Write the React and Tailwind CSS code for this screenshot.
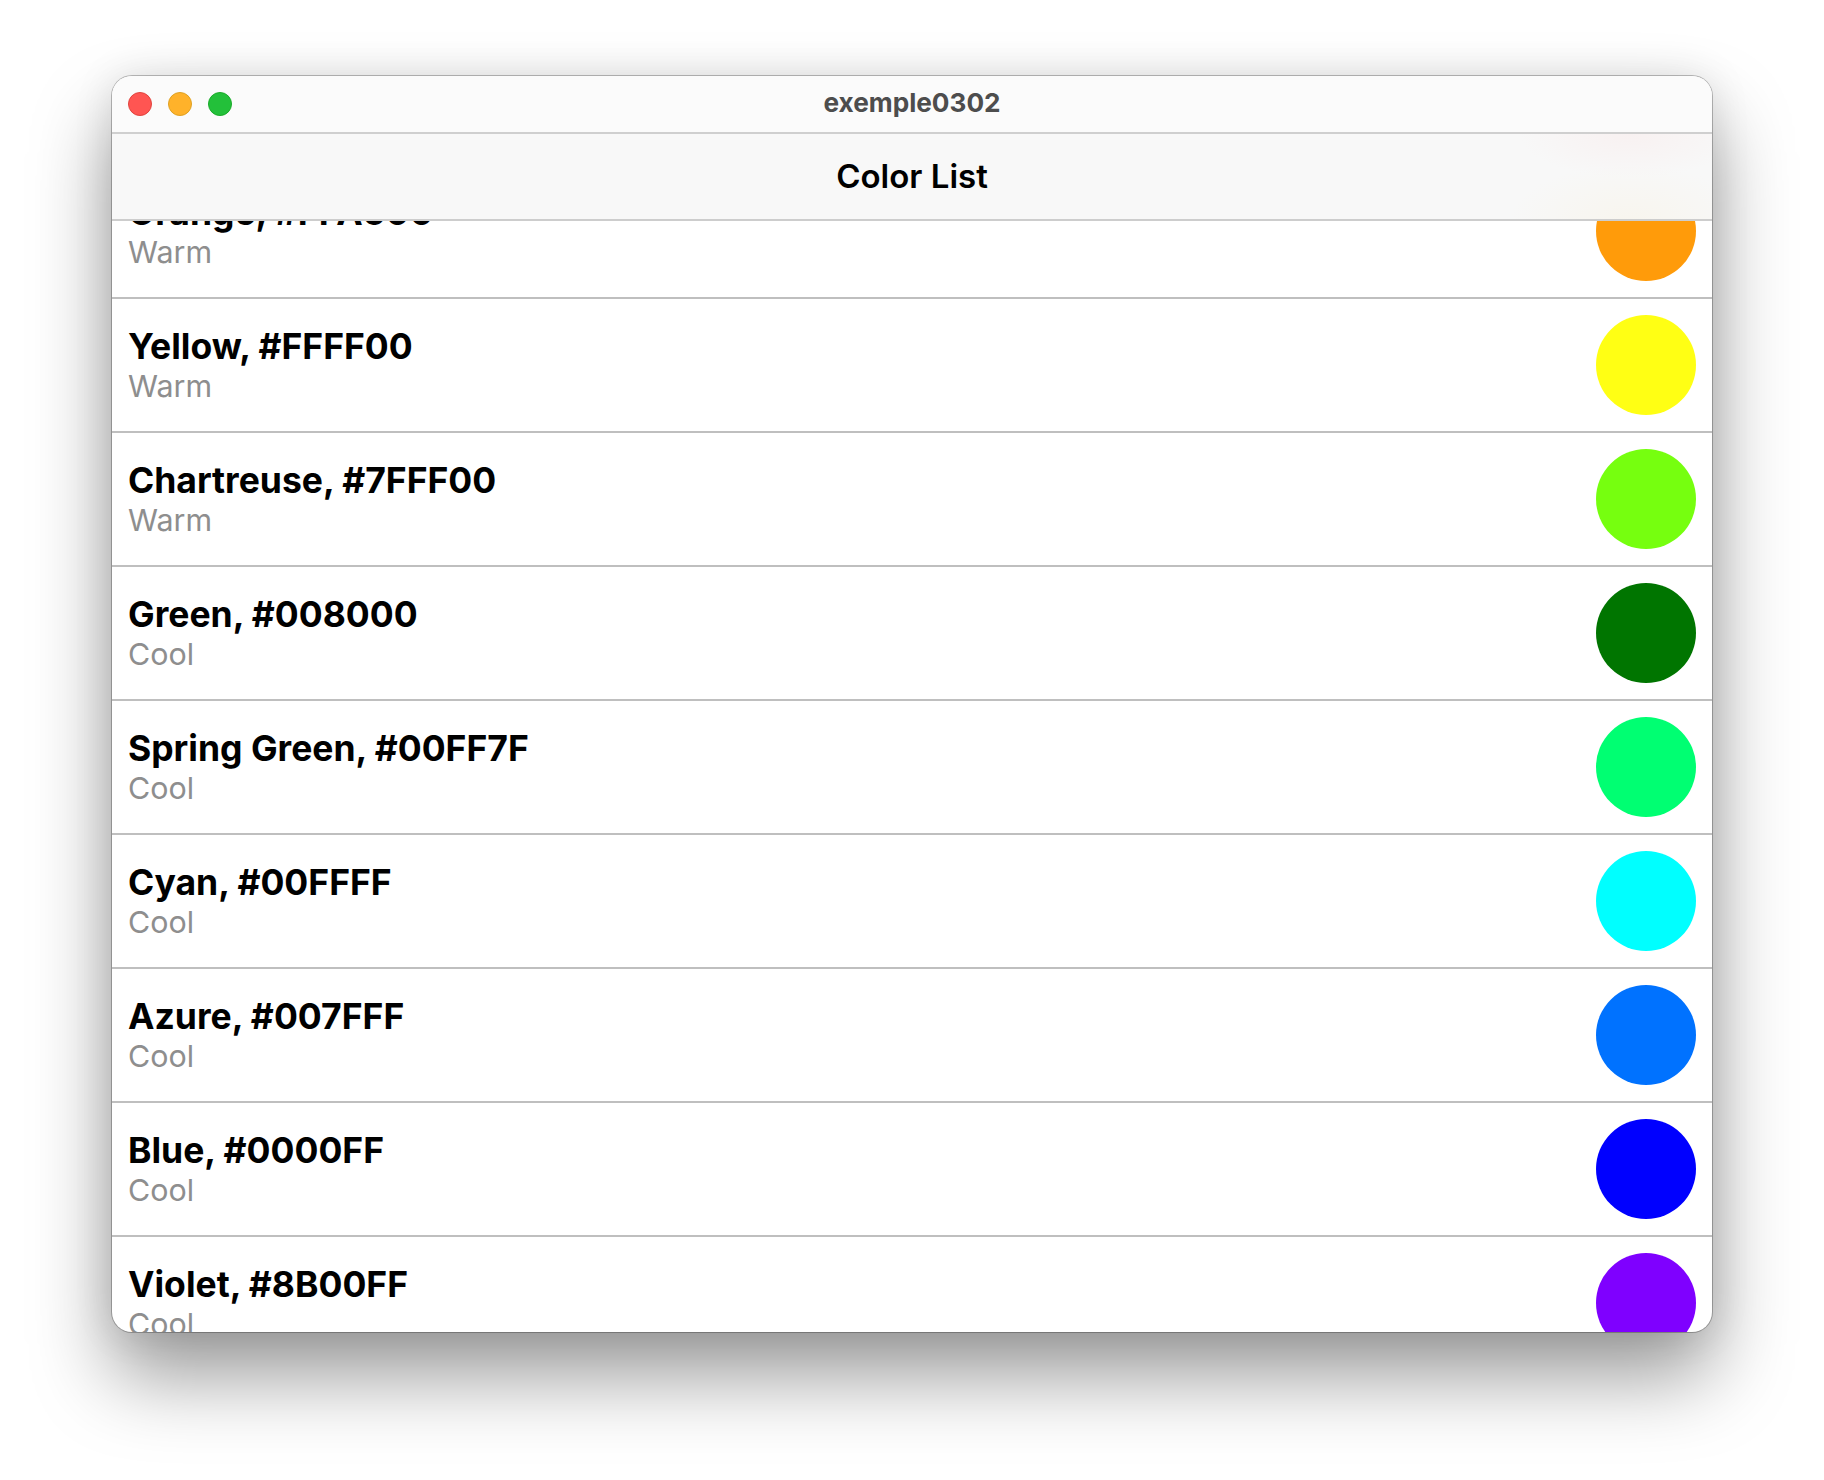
import React from 'react';

const colors = [
    { name: 'Red, #FF0000', group: 'Warm', hex: '#fe0000' },
    { name: 'Orange, #FFA500', group: 'Warm', hex: '#ff9b0a' },
    { name: 'Yellow, #FFFF00', group: 'Warm', hex: '#ffff14' },
    { name: 'Chartreuse, #7FFF00', group: 'Warm', hex: '#76ff0f' },
    { name: 'Green, #008000', group: 'Cool', hex: '#007500' },
    { name: 'Spring Green, #00FF7F', group: 'Cool', hex: '#00ff72' },
    { name: 'Cyan, #00FFFF', group: 'Cool', hex: '#00ffff' },
    { name: 'Azure, #007FFF', group: 'Cool', hex: '#0072ff' },
    { name: 'Blue, #0000FF', group: 'Cool', hex: '#0000ff' },
    { name: 'Violet, #8B00FF', group: 'Cool', hex: '#7f00ff' },
];

const ColorRow = ({ color }) => (
    <div className="flex h-[134px] items-center justify-between border-b-2 border-[#bfbfbf] pl-4 pr-4">
        <div className="flex flex-col pt-[3px] pb-px">
            <span className="text-[35.5px] leading-[40px] font-bold text-black">{color.name}</span>
            <span className="text-[30.4px] leading-[38px] text-[#8e8e8e]">{color.group}</span>
        </div>
        <div className="h-[100px] w-[100px] rounded-full" style={{ backgroundColor: color.hex }} />
    </div>
);

export default function App() {
    return (
        <div className="min-h-[1480px] bg-white pt-[76px] pl-[112px] font-['Inter',sans-serif]">
            <div className="h-[1256px] w-[1600px] overflow-hidden rounded-[20px] bg-white shadow-[0_0_0_1px_rgba(0,0,0,0.25),0_44px_80px_rgba(0,0,0,0.4),0_0_40px_rgba(0,0,0,0.1)]">
                {/* Title bar */}
                <div className="relative flex h-[58px] items-center justify-center border-b-2 border-[#cfcfcf] bg-[#fbfbfb] pb-[2px]">
                    <div className="absolute top-[16px] left-[16px] flex gap-4">
                        <span className="h-6 w-6 rounded-full border border-[#e0443e] bg-[#ff5552]" />
                        <span className="h-6 w-6 rounded-full border border-[#dea123] bg-[#ffb22a]" />
                        <span className="h-6 w-6 rounded-full border border-[#1aab29] bg-[#23c03a]" />
                    </div>
                    <span className="text-[26.2px] font-bold text-[#4d4d4d]">exemple0302</span>
                </div>

                <div className="relative h-[1198px] overflow-hidden">
                    {/* Nav bar lies over the scrolled list, the two glows stand in for the blurred circles behind it */}
                    <div className="absolute inset-x-0 top-0 z-10 flex h-[87px] items-center justify-center border-b-2 border-[#cdcdcd] bg-[#f8f8f8] bg-[radial-gradient(ellipse_110px_44px_at_1518px_0px,#f8f1f1,transparent),radial-gradient(ellipse_120px_56px_at_1518px_87px,#f8f5ee,transparent)]">
                        <span className="text-[33px] font-semibold text-black">Color List</span>
                    </div>
                    <div className="-mt-[103px]">
                        {colors.map((color) => (
                            <ColorRow key={color.name} color={color} />
                        ))}
                    </div>
                </div>
            </div>
        </div>
    );
}
